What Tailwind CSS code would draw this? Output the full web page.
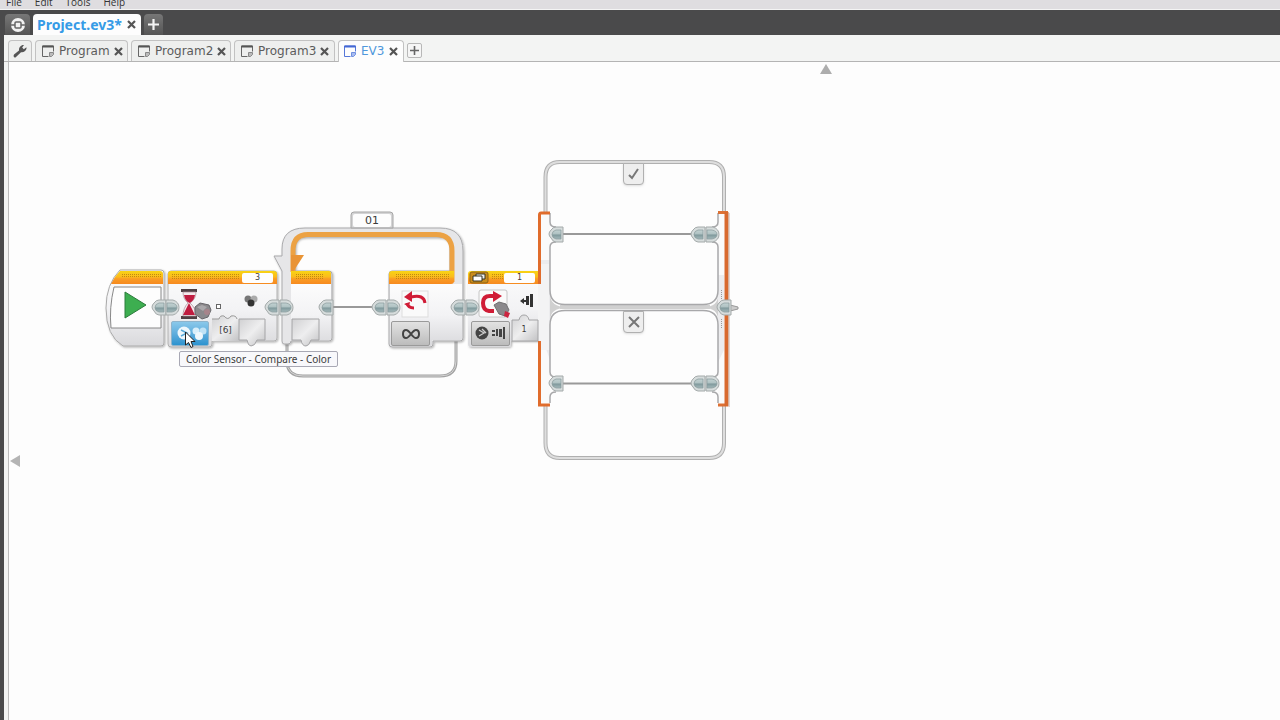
<!DOCTYPE html>
<html lang="en">
  <head>
    <meta charset="UTF-8" />
    <meta name="viewport" content="width=device-width, initial-scale=1.0" />
    <title>Project.ev3</title>
    <script src="https://cdn.jsdelivr.net/npm/@tailwindcss/browser@4"></script>
  </head>
  <body
    class="h-screen flex flex-col overflow-hidden bg-[#4a4a4b] font-['Noto_Sans',sans-serif] text-[#5c5c5c]"
  >
    <!-- Menu bar, scrolled half out of view -->
    <nav
      class="h-[10px] shrink-0 flex items-end gap-[13px] px-[6px] pb-px overflow-hidden bg-[#dfdde0] border-b border-[#f4f4f4] font-['Open_Sans',sans-serif] text-[10px] leading-[11px] text-[#333]"
    >
      <button>File</button>
      <button>Edit</button>
      <button>Tools</button>
      <button>Help</button>
    </nav>

    <!-- Project tabs -->
    <header class="h-[25px] shrink-0 flex items-end gap-[3px] pl-[5px]">
      <button
        aria-label="Lobby"
        class="w-[25px] h-[21px] flex items-center justify-center rounded-t-sm bg-linear-to-b from-[#777] to-[#555]"
      >
        <svg width="16" height="16" viewBox="0 0 16 16">
          <circle cx="8" cy="8" r="7" fill="#f2f2f2" />
          <rect x="5" y="5" width="6" height="6" rx="1" fill="#f2f2f2" stroke="#666" stroke-width="1.5" />
          <path d="M0 8h5M11 8h5" stroke="#666" stroke-width="1.5" />
        </svg>
      </button>
      <div
        class="w-[108px] h-[21px] flex items-center justify-between pl-1 pr-[5px] rounded-t-sm bg-[#fdfdfd]"
      >
        <button class="text-[14px] leading-[20px] font-bold text-[#369be6]">
          Project.ev3*
        </button>
        <button aria-label="Close project">
          <svg width="9" height="9" viewBox="0 0 9 9">
            <path d="M1 1l7 7M8 1l-7 7" stroke="#555" stroke-width="2.2" />
          </svg>
        </button>
      </div>
      <button
        aria-label="Add project"
        class="w-[19px] h-[21px] flex items-center justify-center rounded-t-sm bg-linear-to-b from-[#777] to-[#555]"
      >
        <svg width="11" height="11" viewBox="0 0 11 11">
          <path d="M5.5 0v11M0 5.5h11" stroke="#f4f4f4" stroke-width="2.2" />
        </svg>
      </button>
    </header>

    <div class="flex-1 min-h-0 flex flex-col ml-1 bg-[#f3f4f3]">
      <!-- Program tabs -->
      <div
        class="h-[27px] shrink-0 flex items-end gap-[3px] pl-1 border-b border-[#b4b4b4] font-['DejaVu_Sans',sans-serif] text-[12px] leading-[20px]"
      >
        <button
          aria-label="Project properties"
          class="w-6 h-[21px] flex items-center justify-center rounded-t-sm border border-b-0 border-[#c2c2c2] bg-[#eeefee]"
        >
          <svg width="14" height="14" viewBox="0 0 14 14">
            <path
              d="M1 13q-1-1 0-2.5L6 6.500Q5.500 2.500 9.500 1L11 1 9.200 3.500 10.800 5.200 13.400 3.300 13.500 4.800Q12 8.800 8 8.200L3 13Q2 14 1 13Z"
              fill="#555"
            />
          </svg>
        </button>
        <div
          class="w-[93px] h-[21px] flex items-center pl-[6px] pr-1 rounded-t-sm border border-b-0 border-[#c2c2c2] bg-[#eeefee]"
        >
          <svg width="12" height="12" viewBox="0 0 12 12">
            <path d="M6.500 11.500H.5V1H11.500V6.500" fill="none" stroke="#666" />
            <path d="M.5 1.500H11.500" stroke="#555" stroke-width="2" />
            <path d="M7.500 11.500V7.500H11.500L11.500 9.500L9.500 11.500Z" fill="#bbb" stroke="#888" />
          </svg>
          <button class="pl-[5px]">Program</button>
          <button aria-label="Close Program" class="ml-auto">
            <svg width="9" height="9" viewBox="0 0 9 9">
              <path d="M1 1l7 7M8 1l-7 7" stroke="#555" stroke-width="2.2" />
            </svg>
          </button>
        </div>
        <div
          class="w-[100px] h-[21px] flex items-center pl-[6px] pr-1 rounded-t-sm border border-b-0 border-[#c2c2c2] bg-[#eeefee]"
        >
          <svg width="12" height="12" viewBox="0 0 12 12">
            <path d="M6.500 11.500H.5V1H11.500V6.500" fill="none" stroke="#666" />
            <path d="M.5 1.500H11.500" stroke="#555" stroke-width="2" />
            <path d="M7.500 11.500V7.500H11.500L11.500 9.500L9.500 11.500Z" fill="#bbb" stroke="#888" />
          </svg>
          <button class="pl-[5px]">Program2</button>
          <button aria-label="Close Program2" class="ml-auto">
            <svg width="9" height="9" viewBox="0 0 9 9">
              <path d="M1 1l7 7M8 1l-7 7" stroke="#555" stroke-width="2.2" />
            </svg>
          </button>
        </div>
        <div
          class="w-[101px] h-[21px] flex items-center pl-[6px] pr-[5px] rounded-t-sm border border-b-0 border-[#c2c2c2] bg-[#eeefee]"
        >
          <svg width="12" height="12" viewBox="0 0 12 12">
            <path d="M6.500 11.500H.5V1H11.500V6.500" fill="none" stroke="#666" />
            <path d="M.5 1.500H11.500" stroke="#555" stroke-width="2" />
            <path d="M7.500 11.500V7.500H11.500L11.500 9.500L9.500 11.500Z" fill="#bbb" stroke="#888" />
          </svg>
          <button class="pl-[5px]">Program3</button>
          <button aria-label="Close Program3" class="ml-auto">
            <svg width="9" height="9" viewBox="0 0 9 9">
              <path d="M1 1l7 7M8 1l-7 7" stroke="#555" stroke-width="2.2" />
            </svg>
          </button>
        </div>
        <div
          class="w-[66px] h-[22px] -mb-px pb-px flex items-center pl-[5px] pr-[5px] rounded-t-sm border border-b-0 border-[#c2c2c2] bg-[#fdfdfd]"
        >
          <svg width="12" height="12" viewBox="0 0 12 12">
            <path d="M6.500 11.500H.5V1H11.500V6.500" fill="none" stroke="#5577d8" />
            <path d="M.5 1.500H11.500" stroke="#4468d4" stroke-width="2" />
            <path d="M7.500 11.500V7.500H11.500L11.500 9.500L9.500 11.500Z" fill="#a8bcf0" stroke="#7090e0" />
          </svg>
          <button class="pl-[5px] text-[#5098dc]">EV3</button>
          <button aria-label="Close EV3" class="ml-auto">
            <svg width="9" height="9" viewBox="0 0 9 9">
              <path d="M1 1l7 7M8 1l-7 7" stroke="#555" stroke-width="2.2" />
            </svg>
          </button>
        </div>
        <button
          aria-label="Add program"
          class="size-[15px] mb-[3px] flex items-center justify-center rounded-xs border border-[#b8b8b8] bg-[#f6f6f6]"
        >
          <svg width="9" height="9" viewBox="0 0 9 9">
            <path d="M4.500 0v9M0 4.500h9" stroke="#666" stroke-width="1.6" />
          </svg>
        </button>
      </div>

      <!-- Programming canvas -->
      <main
        class="relative flex-1 ml-1 overflow-hidden border-l border-[#bcbcbc] bg-[#fdfdfd] font-['DejaVu_Sans',sans-serif] text-[#3c3c3c]"
      >
        <button aria-label="Scroll up" class="absolute left-[811px] top-[2px]">
          <svg width="12" height="10" viewBox="0 0 12 10">
            <path d="M6 0L12 10H0Z" fill="#adadad" />
          </svg>
        </button>
        <button aria-label="Scroll left" class="absolute left-px top-[393px]">
          <svg width="10" height="12" viewBox="0 0 10 12">
            <path d="M0 6L10 0V12Z" fill="#b4b4b4" />
          </svg>
        </button>

        <svg
          class="absolute left-0 top-0"
          width="752"
          height="418"
          viewBox="9 62 752 418"
        >
          <defs>
            <linearGradient id="head" x2="0" y2="1">
              <stop offset="0" stop-color="#f8d414" />
              <stop offset=".45" stop-color="#fbbc1c" />
              <stop offset=".6" stop-color="#fa9c24" />
              <stop offset="1" stop-color="#f68a20" />
            </linearGradient>
            <linearGradient id="body" x2="0" y2="1">
              <stop offset="0" stop-color="#fcfcfc" />
              <stop offset=".5" stop-color="#f3f3f5" />
              <stop offset="1" stop-color="#d9d9dc" />
            </linearGradient>
            <linearGradient id="param" x2="1" y2="1">
              <stop offset="0" stop-color="#d0d0d2" />
              <stop offset=".5" stop-color="#eeeeef" />
              <stop offset="1" stop-color="#c2c2c4" />
            </linearGradient>
            <linearGradient id="teal" x2="0" y2="1">
              <stop offset="0" stop-color="#c2d2d2" />
              <stop offset=".48" stop-color="#adc0c1" />
              <stop offset=".52" stop-color="#7d979a" />
              <stop offset="1" stop-color="#a4b9bb" />
            </linearGradient>
            <pattern id="dots" width="2" height="2" patternUnits="userSpaceOnUse">
              <rect width="1" height="1" fill="#c28a10" />
            </pattern>
            <filter id="shadow" x="-10%" y="-10%" width="125%" height="125%">
              <feDropShadow dx="1" dy="1" stdDeviation="1" flood-color="#000" flood-opacity=".3" />
            </filter>
            <g id="out">
              <path d="M14 0H7Q4 0 2 3Q0 5 0 7Q0 9 2 11Q4 15 7 15H14Z" fill="#d6dcdc" stroke="#a4aaaa" />
              <path d="M12 3H7Q3 4 3 7.500Q3 11 7 12H12Z" fill="url(#teal)" stroke="#889a9b" stroke-width=".7" />
            </g>
            <g id="in">
              <path d="M0 0H7Q13 2 13 7.500Q13 13 7 15H0Z" fill="#d6dcdc" stroke="#a4aaaa" />
              <path d="M1 3H6Q11 4 11 7.500Q11 11 6 12H1Z" fill="url(#teal)" stroke="#889a9b" stroke-width=".7" />
            </g>
          </defs>

          <!-- Start block -->
          <g filter="url(#shadow)">
            <path d="M120 270H161Q164 270 164 273V343Q164 346 161 346H123Q106 336 106 308Q106 284 120 270Z" fill="url(#body)" stroke="#aaa" />
          </g>
          <path d="M120 271H160Q163 271 163 274V284H111Q114 277 120 271Z" fill="url(#head)" />
          <rect x="122" y="273" width="39" height="5" fill="url(#dots)" />
          <path d="M114 287H161V328H111Q109 308 114 287Z" fill="#fdfdfd" stroke="#888" />
          <path d="M125 292L146 305L125 318Z" fill="#3dae50" stroke="#2d7c3c" />

          <!-- Wait block -->
          <g filter="url(#shadow)">
            <path d="M171 271H274Q277 271 277 274V338Q277 341 274 341H212V344Q212 347 209 347H171Q168 347 168 344V274Q168 271 171 271Z" fill="url(#body)" stroke="#b0b0b0" />
          </g>
          <path d="M168 284V274Q168 271 171 271H274Q277 271 277 274V284Z" fill="url(#head)" />
          <rect x="172" y="274" width="67" height="5" fill="url(#dots)" />
          <path d="M181 289H197V292H181ZM181 316H197V319H181Z" fill="#4f4044" />
          <path d="M183 292H196Q196 299 190 303Q196 308 196 316H183Q183 308 188 303Q183 299 183 292Z" fill="#f4e8ec" stroke="#a88890" stroke-width=".7" />
          <path d="M184 295H195Q194 301 189.500 303Q185 301 184 295ZM189 303L195 315H183Z" fill="#c01c40" />
          <path d="M195 307L200 303L209 305L211 310L208 317L202 319L195 314Z" fill="#8b898c" stroke="#68666a" />
          <path d="M197 307L202 305L207 307L203 311Z" fill="#aaa8ab" />
          <circle cx="207" cy="312" r="3" fill="#a7848b" />
          <rect x="216.500" y="304.500" width="4" height="4" fill="#fff" stroke="#666" />
          <circle cx="248" cy="299" r="3.500" fill="#777" />
          <circle cx="254" cy="299" r="3.500" fill="#aaa" />
          <circle cx="251" cy="303" r="3.500" fill="#333" />
          <path d="M212 341V319H219Q220 315 224 316Q228 321 231 316Q236 315 237 319H239V341Z" fill="url(#param)" />
          <path d="M212 319H219Q220 315 224 316Q228 321 231 316Q236 315 237 319" fill="none" stroke="#999" />
          <path d="M239 319H265V340H257Q255 346 251 346Q248 346 247 340H239Z" fill="url(#param)" stroke="#a4a4a6" />

          <!-- Loop block -->
          <path d="M287 340V361Q287 376 303 376H440Q456 376 456 361V340" fill="none" stroke="#a2a2a2" stroke-width="3" />
          <path d="M287 340V361Q287 376 303 376H440Q456 376 456 361V340" fill="none" stroke="#d4d4d4" />
          <g filter="url(#shadow)">
            <path d="M282 256V249Q282 228 305 228H440Q463 228 463 251V338Q463 341 460 341H433V344Q433 347 430 347H392Q389 347 389 344V274Q389 271 392 271H450V248Q450 237 438 237H306Q295 237 295 248V271H329Q332 271 332 274V338Q332 341 329 341H291Q291 344 288 344H284Q282 344 282 341V271L274 256Z" fill="#e6e6e8" stroke="#aaaaac" />
          </g>
          <path d="M291 284H331V338Q331 340 329 340H291ZM390 284H462V338Q462 340 460 340H432V344Q432 346 430 346H392Q390 346 390 344Z" fill="url(#body)" />
          <path d="M293 272V251Q293 234.500 308 234.500H436Q452 234.500 452 251V282" fill="none" stroke="#eca244" stroke-width="5" />
          <path d="M291 255H304L293 272H291Z" fill="#e99436" />
          <path d="M291 271H329Q331 271 331 274V284H291ZM389 284V274Q389 271 392 271H454V281Q454 284 451 284Z" fill="url(#head)" />
          <path d="M295 274H323V279H295ZM395 274H449V279H395Z" fill="url(#dots)" />
          <path d="M351 228V215Q351 212 354 212H390Q393 212 393 215V228Z" fill="#d4d4d5" stroke="#a5a5a5" />
          <path d="M292 319H319V340H311Q309 346 306 346Q302 346 301 340H292Z" fill="url(#param)" stroke="#a4a4a6" />
          <path d="M332 307H373" stroke="#999" stroke-width="2" />
          <rect x="402" y="291" width="26" height="26" fill="#fafafa" stroke="#ddd" />
          <path d="M411 297Q424 294 425 303" fill="none" stroke="#d01c36" stroke-width="3" />
          <path d="M404 297L412 291V302Z" fill="#d01c36" />
          <path d="M407 303Q408 308 414 308" fill="none" stroke="#d01c36" stroke-width="3" />
          <path d="M404 304L410 302L409 307Z" fill="#d01c36" />

          <!-- Switch frame -->
          <path d="M545.500 212V177Q545.500 162 560 162H709Q724 162 724 177V212M545.500 405V443Q545.500 458 560 458H709Q724 458 724 443V405" fill="none" stroke="#b0b0b0" stroke-width="4" />
          <path d="M545.500 212V177Q545.500 162 560 162H709Q724 162 724 177V212M545.500 405V443Q545.500 458 560 458H709Q724 458 724 443V405" fill="none" stroke="#dedede" stroke-width="2" />
          <path d="M541 213H550V403H541ZM718 213H724V403H718Z" fill="#fafafa" />
          <path d="M541 260H550V360L541 335ZM718 275H724V350L718 362Z" fill="#ececee" />
          <path d="M550 295Q551 307 566 307H704Q718 307 718 295V320Q718 308 704 308H566Q550 308 550 321Z" fill="#d0d0d0" />
          <path d="M560 307H710" stroke="#d0d0d0" stroke-width="4" />
          <path d="M550 213V222Q550 227 556 227M556 242Q550 242 550 247V290Q550 304.500 565 304.500H703Q718 304.500 718 290V247Q718 242 712 242M718 213V222Q718 227 712 227M556 377Q550 377 550 372V325Q550 310.500 565 310.500H703Q718 310.500 718 325V372Q718 377 712 377M556 392Q550 392 550 397V403M712 392Q718 392 718 397V403" fill="none" stroke="#a8a8aa" stroke-width="1.5" />
          <path d="M550 213H541Q539.500 213 539.500 215V405H550" fill="none" stroke="#e06c2c" stroke-width="3" />
          <path d="M718 212.500H726.500V405H718" fill="none" stroke="#dd7134" stroke-width="3" />
          <path d="M726.500 212V406" stroke="#d8692e" stroke-width="4" />
          <path d="M729 213V407" stroke="#c4aea4" />
          <path d="M721.500 290V299M721.500 319V328" stroke="#999" stroke-dasharray="1 1" />
          <path d="M563 234H692M563 383.500H692" stroke="#999" stroke-width="2" />
          <use href="#out" x="549" y="227" />
          <use href="#out" x="691" y="227" />
          <use href="#in" x="706" y="227" />
          <use href="#out" x="549" y="376" />
          <use href="#out" x="691" y="376" />
          <use href="#in" x="706" y="376" />
          <path d="M730 305L738 307V309L730 311Z" fill="#ccc" stroke="#999" />
          <use href="#out" x="717" y="300" />

          <!-- Switch block -->
          <path d="M471 271H545V341H511V344Q511 347 508 347H471Q468 347 468 344V274Q468 271 471 271Z" fill="url(#body)" filter="url(#shadow)" />
          <path d="M538 264H549V350H541V341H538Z" fill="#f3f3f4" />
          <path d="M539.500 264V284" stroke="#e06c2c" stroke-width="3" />
          <path d="M539.500 341V352" stroke="#e06c2c" stroke-width="3" />
          <path d="M468 284V274Q468 271 471 271H538V284Z" fill="url(#head)" />
          <rect x="491" y="274" width="12" height="5" fill="url(#dots)" />
          <rect x="470" y="272" width="18" height="11" rx="2" fill="#c88a1c" stroke="#8c6414" />
          <path d="M476 274H485V279H476Z" fill="#eee" stroke="#332" />
          <path d="M473 276H482V281H473Z" fill="#fff" stroke="#332" />
          <rect x="479" y="290" width="28" height="27" rx="2" fill="#fafafa" stroke="#c6c6c6" />
          <path d="M494 311H489Q483 310 483 303Q483 296 490 296H495" fill="none" stroke="#d01c36" stroke-width="4" />
          <path d="M493 291L502 296L493 302Z" fill="#d01c36" />
          <path d="M494 305L499 302L506 304L509 310L505 316L499 314Z" fill="#8b898c" stroke="#727072" />
          <path d="M505 311L510 313L508 318L504 316Z" fill="#cc2440" />
          <path d="M530 294H533V307H530ZM526 296H529V305H526Z" fill="#333" />
          <path d="M520 301L524 298V304ZM523 300H527V302H523Z" fill="#333" />
          <path d="M512 341V320H519Q520 315 524 315Q528 315 529 320H538V341Z" fill="url(#param)" stroke="#a4a4a6" />

          <use href="#out" x="152" y="300" />
          <use href="#in" x="166" y="300" />
          <use href="#out" x="265" y="300" />
          <use href="#in" x="280" y="300" />
          <use href="#out" x="319" y="300" />
          <use href="#out" x="372" y="300" />
          <use href="#in" x="387" y="300" />
          <use href="#out" x="451" y="300" />
          <use href="#in" x="466" y="300" />
        </svg>

        <!-- Block controls -->
        <input
          aria-label="Wait port"
          value="3"
          class="absolute left-[233px] top-[211px] w-[31px] h-[10px] rounded-xs bg-[#fefefe] text-[8px] leading-[10px] text-center"
        />
        <button
          aria-label="Color Sensor - Compare - Color"
          class="absolute left-[162px] top-[259px] w-[38px] h-[25px] flex items-center justify-center rounded-xs border border-[#8eb4cc] bg-linear-to-b from-[#8ac8ea] to-[#2b93cf]"
        >
          <svg width="34" height="22" viewBox="0 0 34 22">
            <circle cx="11" cy="10" r="6.500" fill="#eef7fc" />
            <path d="M8 7L14 10L8 13" fill="none" stroke="#5aaad8" stroke-width="1.500" />
            <circle cx="23" cy="8" r="3.500" fill="#d8eefa" />
            <circle cx="30" cy="8" r="3.500" fill="#c0e2f5" />
            <circle cx="26" cy="13" r="4" fill="#eef7fc" />
          </svg>
        </button>
        <input
          aria-label="Colors"
          value="[6]"
          class="absolute left-[204px] top-[261px] w-[25px] h-[14px] text-[9px] leading-[14px] text-center"
        />
        <input
          aria-label="Loop name"
          value="01"
          class="absolute left-[344px] top-[152px] w-[38px] h-[13px] rounded-xs bg-[#fdfdfd] text-[11px] leading-[13px] text-center"
        />
        <button
          aria-label="Unlimited"
          class="absolute left-[382px] top-[259px] w-[39px] h-[25px] flex items-center justify-center rounded-xs border border-[#9a9a9a] bg-linear-to-b from-[#e2e2e2] to-[#bcbcbc]"
        >
          <svg width="20" height="12" viewBox="0 0 20 12">
            <path d="M10 6Q7 2 5 2Q2 2 2 6Q2 10 5 10Q7 10 10 6Q13 2 15 2Q18 2 18 6Q18 10 15 10Q13 10 10 6Z" fill="none" stroke="#444" stroke-width="2" />
          </svg>
        </button>
        <input
          aria-label="Switch port"
          value="1"
          class="absolute left-[495px] top-[211px] w-[31px] h-[10px] rounded-xs bg-[#fefefe] text-[8px] leading-[10px] text-center"
        />
        <button
          aria-label="Touch Sensor - Compare - State"
          class="absolute left-[462px] top-[259px] w-[39px] h-[25px] flex items-center justify-center rounded-xs border border-[#9a9a9a] bg-linear-to-b from-[#e2e2e2] to-[#bcbcbc]"
        >
          <svg width="32" height="16" viewBox="0 0 32 16">
            <circle cx="7" cy="7" r="6.500" fill="#444" />
            <path d="M4 4L9 7L4 10M7 3L11 7" fill="none" stroke="#ccc" stroke-width="1.300" />
            <path d="M17 4H20V6H17ZM17 8H20V10H17ZM21 3H23V10H21ZM24 3H27V11H24ZM28 1H30V13H28Z" fill="#444" />
          </svg>
        </button>
        <input
          aria-label="State"
          value="1"
          class="absolute left-[505px] top-[261px] w-[20px] h-[14px] text-[8px] leading-[14px] text-center"
        />
        <button
          aria-label="True case"
          class="absolute left-[614px] top-[101px] w-[21px] h-[22px] flex items-center justify-center rounded-b-sm border border-[#b0b0b0] bg-[#eee] shadow-sm"
        >
          <svg width="12" height="12" viewBox="0 0 12 12">
            <path d="M1 7L4 10L10 1" fill="none" stroke="#777" stroke-width="2" />
          </svg>
        </button>
        <button
          aria-label="False case"
          class="absolute left-[614px] top-[249px] w-[21px] h-[22px] flex items-center justify-center rounded-b-sm border border-[#b0b0b0] bg-[#eee] shadow-sm"
        >
          <svg width="12" height="12" viewBox="0 0 12 12">
            <path d="M1 1L11 11M11 1L1 11" stroke="#777" stroke-width="2" />
          </svg>
        </button>

        <div
          role="tooltip"
          class="absolute left-[170px] top-[289px] px-[6px] h-4 rounded-xs border border-[#a8a8b4] bg-[#f8f8fb] font-['Noto_Sans',sans-serif] text-[10px] leading-[15px] whitespace-nowrap"
        >
          Color Sensor - Compare - Color
        </div>
        <!-- Mouse pointer -->
        <svg class="absolute left-[176px] top-[269px]" width="12" height="18" viewBox="0 0 12 18">
          <path d="M.5 1V14L3.500 11.500L6 16.500L8 15.500L6 10.500H10Z" fill="#fff" stroke="#222" />
        </svg>
      </main>
    </div>
  </body>
</html>
